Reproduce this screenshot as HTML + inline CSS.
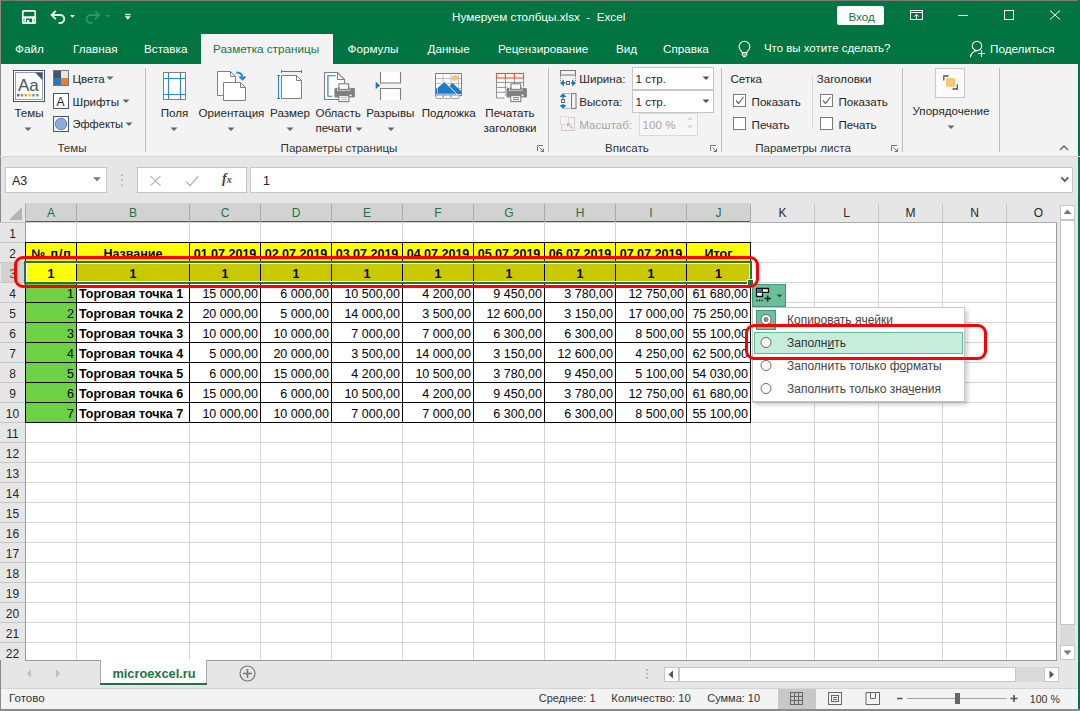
<!DOCTYPE html><html><head><meta charset="utf-8"><style>
html,body{margin:0;padding:0;}
body{width:1080px;height:711px;position:relative;overflow:hidden;background:#f3f3f3;font-family:"Liberation Sans", sans-serif;}
div{position:absolute;box-sizing:border-box;}
.t{white-space:nowrap;line-height:normal;}
svg{position:absolute;overflow:visible;}
</style></head><body>
<div style="left:0px;top:0px;width:1080px;height:64px;background:#007541;"></div>
<div style="left:0px;top:0px;width:1080px;height:1px;background:#7a7a7a;"></div>
<div style="left:0px;top:0px;width:1px;height:711px;background:#8a8a8a;"></div>
<div style="left:1078px;top:0px;width:2px;height:711px;background:#007541;"></div>
<svg style="left:0;top:0" width="140" height="34">
<g fill="none" stroke="#fff" stroke-width="1.7">
<rect x="22.8" y="10.8" width="12.4" height="12.4" rx="1"/>
<path d="M22.8 17.2h12.4"/>
<path d="M25.2 23.2v-5.5h7.8v5.5"/>
</g>
<rect x="27" y="20" width="2.3" height="3.3" fill="#fff"/>
<path d="M55.8 10.8 L51.6 15 L55.8 19.2" fill="none" stroke="#f0f0f0" stroke-width="1.9"/>
<path d="M52 15h8a4 4 0 0 1 0.5 8h-2" fill="none" stroke="#f0f0f0" stroke-width="1.9"/>
<path d="M70 15h5l-2.5 2.8z" fill="#fff"/>
<path d="M95 10.8 L99.2 15 L95 19.2" fill="none" stroke="#1f9a6a" stroke-width="1.9"/>
<path d="M98.8 15h-8a4 4 0 0 0 -0.5 8h2" fill="none" stroke="#1f9a6a" stroke-width="1.9"/>
<path d="M105 15h5l-2.5 2.8z" fill="#1f9a6a"/>
<path d="M125 14.5h5.5" stroke="#fff" stroke-width="1.3"/>
<path d="M124.8 16.3h6l-3 3.5z" fill="#fff"/>
</svg>
<div class="t" style="left:452px;top:10.11px;font-size:11.7px;color:#fff;">Нумеруем столбцы.xlsx&nbsp;&nbsp;-&nbsp;&nbsp;Excel</div>
<div style="left:837px;top:6px;width:47px;height:19px;background:#fff;border-radius:2px;"></div>
<div class="t" style="left:848.5px;top:9.70px;font-size:11.6px;color:#217346;">Вход</div>
<svg style="left:0;top:0" width="1080" height="34">
<g fill="none" stroke="#fff" stroke-width="1">
<rect x="910.5" y="10.5" width="12" height="9"/>
<path d="M910.5 12.5h12"/>
<path d="M916.5 19.5v-5M914.3 16.5l2.2-2.2 2.2 2.2"/>
<path d="M958 15.5h10"/>
<rect x="1004.5" y="10.5" width="9" height="9"/>
<path d="M1050 10.5l10 9M1060 10.5l-10 9"/>
</g></svg>
<div style="left:201px;top:34px;width:132px;height:30px;background:#f3f3f3;"></div>
<div class="t" style="left:15px;top:41.91px;font-size:11.7px;color:#fff;">Файл</div>
<div class="t" style="left:73px;top:41.91px;font-size:11.7px;color:#fff;">Главная</div>
<div class="t" style="left:144px;top:41.91px;font-size:11.7px;color:#fff;">Вставка</div>
<div class="t" style="left:347.5px;top:41.91px;font-size:11.7px;color:#fff;">Формулы</div>
<div class="t" style="left:427.5px;top:41.91px;font-size:11.7px;color:#fff;">Данные</div>
<div class="t" style="left:498px;top:41.91px;font-size:11.7px;color:#fff;">Рецензирование</div>
<div class="t" style="left:616px;top:41.91px;font-size:11.7px;color:#fff;">Вид</div>
<div class="t" style="left:663px;top:41.91px;font-size:11.7px;color:#fff;">Справка</div>
<div class="t" style="left:990px;top:41.91px;font-size:11.7px;color:#fff;">Поделиться</div>
<div class="t" style="left:213px;top:41.91px;font-size:11.7px;color:#217346;">Разметка страницы</div>
<div class="t" style="left:764px;top:42.14px;font-size:11.45px;color:#fff;">Что вы хотите сделать?</div>
<svg style="left:0;top:34" width="1080" height="30">
<g fill="none" stroke="#fff" stroke-width="1.1">
<path d="M742.3 18.5c-1.6-2-3.2-3.5-3.2-5.8a5.4 5.4 0 0 1 10.8 0c0 2.3-1.6 3.8-3.2 5.8z"/>
<rect x="742.3" y="18.8" width="4.4" height="2.2"/>
<path d="M743 22.6h3"/>
<circle cx="977" cy="11.9" r="4.7"/>
<path d="M970.5 23.3c0-3.5 3-6.6 6.5-6.6"/>
<path d="M978 19.5h7M981.5 16v7"/>
</g></svg>
<div style="left:0px;top:156px;width:1080px;height:1px;background:#d5d5d5;"></div>
<div style="left:145px;top:68px;width:1px;height:84px;background:#bdbdbd;"></div>
<div style="left:548px;top:68px;width:1px;height:84px;background:#bdbdbd;"></div>
<div style="left:721px;top:68px;width:1px;height:84px;background:#bdbdbd;"></div>
<div style="left:902px;top:68px;width:1px;height:84px;background:#bdbdbd;"></div>
<div style="left:999px;top:68px;width:1px;height:84px;background:#bdbdbd;"></div>
<div style="left:812px;top:75px;width:1px;height:54px;background:#d9d9d9;"></div>
<div class="t" style="left:-128px;width:400px;text-align:center;top:140.50px;font-size:11.6px;color:#333;">Темы</div>
<div class="t" style="left:139px;width:400px;text-align:center;top:140.50px;font-size:11.6px;color:#333;">Параметры страницы</div>
<div class="t" style="left:427px;width:400px;text-align:center;top:140.50px;font-size:11.6px;color:#333;">Вписать</div>
<div class="t" style="left:603px;width:400px;text-align:center;top:140.50px;font-size:11.6px;color:#333;">Параметры листа</div>
<svg style="left:537px;top:145px" width="8" height="8"><path d="M0.5 6V0.5H6" fill="none" stroke="#777" stroke-width="1"/><path d="M2.5 2.5l4 4M3.5 6.5h3v-3" fill="none" stroke="#777" stroke-width="1"/></svg>
<svg style="left:710px;top:145px" width="8" height="8"><path d="M0.5 6V0.5H6" fill="none" stroke="#777" stroke-width="1"/><path d="M2.5 2.5l4 4M3.5 6.5h3v-3" fill="none" stroke="#777" stroke-width="1"/></svg>
<svg style="left:891px;top:145px" width="8" height="8"><path d="M0.5 6V0.5H6" fill="none" stroke="#777" stroke-width="1"/><path d="M2.5 2.5l4 4M3.5 6.5h3v-3" fill="none" stroke="#777" stroke-width="1"/></svg>
<svg style="left:0;top:60px" width="150" height="100">
<rect x="13.5" y="10.5" width="31" height="31" fill="#fff" stroke="#44546a" stroke-width="1"/>
<rect x="15.5" y="12.5" width="27" height="27" fill="#fff" stroke="#7a8aa0" stroke-width="0.8"/>
<path d="M35 12.5h7.5v7.5z" fill="#44546a"/>
<text x="18" y="30.5" font-family="Liberation Sans" font-size="17" fill="#44546a">Aa</text>
<rect x="17" y="34" width="2.5" height="2.5" fill="#2e75b6"/>
<rect x="20.8" y="34" width="2.5" height="2.5" fill="#ed7d31"/>
<rect x="24.6" y="34" width="2.5" height="2.5" fill="#a5a5a5"/>
<rect x="28.4" y="34" width="2.5" height="2.5" fill="#ffc000"/>
<rect x="32.2" y="34" width="2.5" height="2.5" fill="#5b9bd5"/>
<rect x="36" y="34" width="2.5" height="2.5" fill="#70ad47"/>
<!-- Цвета -->
<rect x="53.5" y="10.5" width="15" height="15" fill="#fff" stroke="#777"/>
<rect x="54" y="11" width="7" height="7" fill="#44546a"/>
<rect x="61" y="11" width="7" height="7" fill="#e7e6e6"/>
<rect x="54" y="18" width="7" height="7" fill="#2e75b6"/>
<rect x="61" y="18" width="7" height="7" fill="#ed7d31"/>
<!-- Шрифты -->
<rect x="53.5" y="33.5" width="15" height="15" fill="#fff" stroke="#44546a"/>
<text x="56.5" y="46" font-family="Liberation Sans" font-size="12" fill="#222">A</text>
<!-- Эффекты -->
<rect x="53.5" y="56.5" width="15" height="15" fill="#fff" stroke="#44546a"/>
<circle cx="61" cy="64" r="5.8" fill="#8eaadb" stroke="#4472c4" stroke-width="0.8"/>
</svg>
<div class="t" style="left:-171px;width:400px;text-align:center;top:106.00px;font-size:11.6px;color:#262626;">Темы</div>
<svg style="left:24px;top:126.5px" width="8" height="5"><path d="M0.5 0.5h7l-3.5 3.5z" fill="#666"/></svg>
<div class="t" style="left:72.5px;top:71.80px;font-size:11.6px;color:#262626;">Цвета</div>
<svg style="left:106px;top:76px" width="8" height="5"><path d="M0.5 0.5h7l-3.5 3.5z" fill="#666"/></svg>
<div class="t" style="left:72.5px;top:94.70px;font-size:11.6px;color:#262626;">Шрифты</div>
<svg style="left:121.5px;top:99px" width="8" height="5"><path d="M0.5 0.5h7l-3.5 3.5z" fill="#666"/></svg>
<div class="t" style="left:72.5px;top:118.45px;font-size:11.1px;color:#262626;">Эффекты</div>
<svg style="left:124.5px;top:122px" width="8" height="5"><path d="M0.5 0.5h7l-3.5 3.5z" fill="#666"/></svg>
<svg style="left:0;top:0" width="560" height="160">
<rect x="163.5" y="72.5" width="22" height="27" fill="#fff" stroke="#808080"/>
<path d="M168.5 73v26M180.5 73v26M164 78.5h21M164 94.5h21" stroke="#2e86cf" stroke-width="1.2"/>
<!-- Ориентация -->
<path d="M217.5 71.5h13l5 5v19h-18z" fill="#fff" stroke="#808080"/>
<path d="M230.5 71.5v5h5" fill="none" stroke="#808080"/>
<path d="M223.5 82.5h17l5 5v13h-22z" fill="#fff" stroke="#808080"/>
<path d="M240.5 82.5v5h5" fill="none" stroke="#808080"/>
<path d="M236.5 72.5c4 0 6 2 6 5.5" fill="none" stroke="#2e86cf" stroke-width="1.8"/>
<path d="M239.5 76.5l3 3 3-3" fill="none" stroke="#2e86cf" stroke-width="1.8"/>
<!-- Размер -->
<path d="M281.5 75.5h15l5 5v18h-20z" fill="#fff" stroke="#808080"/>
<path d="M296.5 75.5v5h5" fill="none" stroke="#808080"/>
<path d="M281.5 71.5h20M281.5 70v3M301.5 70v3" stroke="#2e86cf" stroke-width="1"/>
<path d="M278.5 75.5v23M277 75.5h3M277 98.5h3" stroke="#2e86cf" stroke-width="1"/>
<!-- Область печати -->
<path d="M324.5 72.5h13l7 7v20h-20z" fill="#fff" stroke="#808080" stroke-width="1.1"/>
<path d="M337.5 72.5v7h7" fill="none" stroke="#808080" stroke-width="1.1"/>
<path d="M335.5 75.8h-7.6v20.5h4.5" stroke="#1e7ac6" stroke-width="1.1" fill="none"/>
<g id="prn">
<path d="M334 89.2a1.7 1.7 0 0 1 1.7-1.7h18a1.7 1.7 0 0 1 1.7 1.7v7a1.7 1.7 0 0 1 -1.7 1.7h-18a1.7 1.7 0 0 1 -1.7-1.7z" fill="#808080" stroke="#fff" stroke-width="0.8"/>
<rect x="337.5" y="87" width="12.5" height="3.6" fill="#1e7ac6" stroke="#fff" stroke-width="0.6"/>
<rect x="339" y="83.8" width="9.6" height="5.6" fill="#fff" stroke="#808080" stroke-width="1.1"/>
<rect x="349.6" y="94.6" width="2" height="1.6" fill="#fff"/>
<rect x="338.8" y="95.6" width="10" height="6" fill="#fff" stroke="#808080" stroke-width="1.1"/>
</g>
<path d="M341 97.6h6M341 99.6h6" stroke="#aaa" stroke-width="0.8"/>
<!-- Разрывы -->
<path d="M380.5 72v11h20v-11" fill="#fff" stroke="#808080" stroke-width="1.1"/>
<path d="M380.5 100v-11.5h20v11.5" fill="#fff" stroke="#808080" stroke-width="1.1"/>
<path d="M375.7 81.7l4.5 3.7-4.5 3.7z" fill="#1e7ac6"/>
<!-- Подложка -->
<rect x="435.5" y="73.5" width="26" height="22" fill="#fff" stroke="#808080"/>
<path d="M443 74v21M451 74v21M458.5 74v21M436 78.5h25M436 83.5h25M436 88.5h25" stroke="#b8b8b8" stroke-width="0.9"/>
<path d="M436 95.5v2a1 1 0 0 0 1 1h5a1 1 0 0 0 1-1v-2M443.5 95.5v2a1 1 0 0 0 1 1h5a1 1 0 0 0 1-1v-2M451 95.5v2a1 1 0 0 0 1 1h6a1 1 0 0 0 1-1v-2" fill="#fff" stroke="#9a9a9a" stroke-width="0.9"/>
<circle cx="455" cy="78" r="3" fill="#f4c27a"/>
<path d="M448 87.5l4.5-4.5 8.5 8v3h-7z" fill="#1e7ac6"/>
<path d="M437 94v-6l7.3-6.5 12.5 12.5z" fill="#1e7ac6" stroke="#fff" stroke-width="1"/>
<path d="M436.5 88.5v5.5h20" fill="none" stroke="#1e7ac6" stroke-width="1"/>
<!-- Печатать заголовки -->
<path d="M496.5 73.5h27v24.5h-27z" fill="#fff"/>
<path d="M496.5 78v20h8M505.4 78v18M514.4 78v18M523.5 78v16M497 82.4h26M497 87.4h26M497 92.3h26" fill="none" stroke="#909090" stroke-width="1"/>
<rect x="496.5" y="73.5" width="27" height="4.5" fill="#fff" stroke="#f05a28" stroke-width="1.2"/>
<path d="M505.4 73.5v4.5M514.4 73.5v4.5" stroke="#f05a28" stroke-width="1.2"/>
<g transform="translate(172 0)">
<path d="M334 89.2a1.7 1.7 0 0 1 1.7-1.7h18a1.7 1.7 0 0 1 1.7 1.7v7a1.7 1.7 0 0 1 -1.7 1.7h-18a1.7 1.7 0 0 1 -1.7-1.7z" fill="#808080" stroke="#fff" stroke-width="0.8"/>
<rect x="337.5" y="87" width="12.5" height="3.6" fill="#1e7ac6" stroke="#fff" stroke-width="0.6"/>
<rect x="339" y="83.8" width="9.6" height="5.6" fill="#fff" stroke="#808080" stroke-width="1.1"/>
<rect x="349.6" y="94.6" width="2" height="1.6" fill="#fff"/>
<rect x="338.8" y="95.6" width="10" height="6" fill="#fff" stroke="#808080" stroke-width="1.1"/>
</g>
<path d="M513 97.6h6M513 99.6h6" stroke="#1e7ac6" stroke-width="0.9"/>
</svg>
<div class="t" style="left:-25.5px;width:400px;text-align:center;top:105.50px;font-size:11.6px;color:#262626;">Поля</div>
<svg style="left:170.3px;top:126.5px" width="8" height="5"><path d="M0.5 0.5h7l-3.5 3.5z" fill="#666"/></svg>
<div class="t" style="left:31.5px;width:400px;text-align:center;top:105.50px;font-size:11.6px;color:#262626;">Ориентация</div>
<svg style="left:227px;top:126.5px" width="8" height="5"><path d="M0.5 0.5h7l-3.5 3.5z" fill="#666"/></svg>
<div class="t" style="left:90px;width:400px;text-align:center;top:105.50px;font-size:11.6px;color:#262626;">Размер</div>
<svg style="left:286.4px;top:126.5px" width="8" height="5"><path d="M0.5 0.5h7l-3.5 3.5z" fill="#666"/></svg>
<div class="t" style="left:315.4px;top:105.50px;font-size:11.6px;color:#262626;">Область</div>
<div class="t" style="left:315.4px;top:121.00px;font-size:11.6px;color:#262626;">печати</div>
<svg style="left:354.7px;top:126.5px" width="8" height="5"><path d="M0.5 0.5h7l-3.5 3.5z" fill="#666"/></svg>
<div class="t" style="left:190.3px;width:400px;text-align:center;top:105.50px;font-size:11.6px;color:#262626;">Разрывы</div>
<svg style="left:386.6px;top:126.5px" width="8" height="5"><path d="M0.5 0.5h7l-3.5 3.5z" fill="#666"/></svg>
<div class="t" style="left:248.7px;width:400px;text-align:center;top:105.50px;font-size:11.6px;color:#262626;">Подложка</div>
<div class="t" style="left:310px;width:400px;text-align:center;top:105.50px;font-size:11.6px;color:#262626;">Печатать</div>
<div class="t" style="left:310px;width:400px;text-align:center;top:121.00px;font-size:11.6px;color:#262626;">заголовки</div>
<svg style="left:0;top:0" width="1080" height="160">
<rect x="560.5" y="70.5" width="15" height="4.5" fill="none" stroke="#777"/>
<path d="M560.5 76v6M575.5 76v6" stroke="#777" stroke-dasharray="1 1"/>
<path d="M563 83h2.5M571 83h2.5" stroke="#1e7ac6" stroke-width="1.6"/>
<path d="M560 83l4-3.5v7z M576 83l-4-3.5v7z" fill="#1e7ac6"/>
<rect x="566.5" y="81.5" width="3" height="3" fill="none" stroke="#666" stroke-width="1"/>
<rect x="571.5" y="93.5" width="4.5" height="15" fill="none" stroke="#777"/>
<path d="M564.5 93.5h6M564.5 108.5h6" stroke="#777" stroke-dasharray="1 1"/>
<path d="M563 96v2.5M563 104v2.5" stroke="#1e7ac6" stroke-width="1.6"/>
<path d="M563 93l-3.5 4h7z M563 109l-3.5-4h7z" fill="#1e7ac6"/>
<rect x="561.5" y="99.5" width="3" height="3" fill="none" stroke="#666" stroke-width="1"/>
<rect x="560.5" y="116.5" width="8" height="8" fill="none" stroke="#c8bfbf" stroke-dasharray="1 1"/>
<path d="M569.5 125.5v-5h5v10.5h-13v-5.5h8z" fill="#f7f0f2"/><path d="M561.5 125v5.5h13v-13h-5" fill="none" stroke="#d0c8c8"/>
<path d="M567.5 123.5l5 5M567.5 126.5v-3h3" fill="none" stroke="#c0b8b8" stroke-width="1.1"/>
<!-- combo boxes -->
<rect x="632.5" y="67.5" width="81" height="22" fill="#fff" stroke="#c6c6c6"/>
<rect x="632.5" y="90.5" width="81" height="22" fill="#fff" stroke="#c6c6c6"/>
<path d="M702.5 76.5h7l-3.5 3.5z" fill="#555"/>
<path d="M702.5 99.5h7l-3.5 3.5z" fill="#555"/>
<rect x="639.5" y="113.5" width="58" height="22" fill="#f7f7f7" stroke="#dadada"/>
<path d="M687 120h6l-3-3z M687 125.5h6l-3 3z" fill="#d6d6d6"/>
<!-- checkboxes -->
<rect x="733.5" y="94.5" width="12" height="12" fill="#fff" stroke="#7a7a7a"/>
<rect x="733.5" y="117.5" width="12" height="12" fill="#fff" stroke="#7a7a7a"/>
<rect x="820.5" y="94.5" width="12" height="12" fill="#fff" stroke="#7a7a7a"/>
<rect x="820.5" y="117.5" width="12" height="12" fill="#fff" stroke="#7a7a7a"/>
<path d="M736 100.5l2.5 3 5-6.5" fill="none" stroke="#666" stroke-width="1.2"/>
<path d="M823 100.5l2.5 3 5-6.5" fill="none" stroke="#666" stroke-width="1.2"/>
<!-- arrange -->
<rect x="935.5" y="68.5" width="29" height="29" fill="#fbfbfb" stroke="#c8c8c8" stroke-width="1.1"/>
<path d="M943.8 80.5V76h4.8" fill="none" stroke="#555" stroke-width="1.3"/>
<path d="M952.5 89h4.8v-4.8" fill="none" stroke="#555" stroke-width="1.3"/>
<rect x="946" y="78" width="9.2" height="8.8" fill="#f8c678"/>
<path d="M1060 150l4-4 4 4" fill="none" stroke="#666" stroke-width="1.5"/>
</svg>
<div class="t" style="left:579.3px;top:71.90px;font-size:11.6px;color:#262626;">Ширина:</div>
<div class="t" style="left:579.3px;top:94.70px;font-size:11.6px;color:#262626;">Высота:</div>
<div class="t" style="left:579.3px;top:117.60px;font-size:11.6px;color:#a6a6a6;">Масштаб:</div>
<div class="t" style="left:635.6px;top:72.00px;font-size:11.6px;color:#262626;">1 стр.</div>
<div class="t" style="left:635.6px;top:95.00px;font-size:11.6px;color:#262626;">1 стр.</div>
<div class="t" style="left:642.6px;top:118.00px;font-size:11.6px;color:#a6a6a6;">100 %</div>
<div class="t" style="left:730.5px;top:71.90px;font-size:11.6px;color:#262626;">Сетка</div>
<div class="t" style="left:751.6px;top:94.70px;font-size:11.6px;color:#262626;">Показать</div>
<div class="t" style="left:751.6px;top:117.60px;font-size:11.6px;color:#262626;">Печать</div>
<div class="t" style="left:816.7px;top:71.90px;font-size:11.6px;color:#262626;">Заголовки</div>
<div class="t" style="left:838.5px;top:94.70px;font-size:11.6px;color:#262626;">Показать</div>
<div class="t" style="left:838.5px;top:117.60px;font-size:11.6px;color:#262626;">Печать</div>
<div class="t" style="left:751px;width:400px;text-align:center;top:103.90px;font-size:11.6px;color:#262626;">Упорядочение</div>
<svg style="left:947.2px;top:124.5px" width="8" height="5"><path d="M0.5 0.5h7l-3.5 3.5z" fill="#666"/></svg>
<div style="left:1px;top:157px;width:1077px;height:531px;background:#e6e6e6;"></div>
<div style="left:5px;top:167px;width:102px;height:26px;background:#fff;border:1px solid #c6c6c6;"></div>
<div class="t" style="left:12px;top:173.59px;font-size:12.5px;color:#222;">A3</div>
<svg style="left:92.5px;top:177px" width="9" height="6"><path d="M0.2 0.3h7.6l-3.8 4z" fill="#777"/></svg>
<div style="left:137px;top:167px;width:110px;height:26px;background:#fff;border:1px solid #c6c6c6;"></div>
<svg style="left:0;top:155px" width="300" height="45">
<path d="M122 19.5v1.5M122 24.5v1.5M122 29.5v1.5" stroke="#9a9a9a" stroke-width="1.3"/>
<path d="M150.5 21l10 9.5M160.5 21l-10 9.5" stroke="#bdbdbd" stroke-width="1.4"/>
<path d="M186 26.5l4 4 8.5-9.5" fill="none" stroke="#bdbdbd" stroke-width="1.6"/>
</svg>
<div class="t" style="left:222px;top:171px;font-family:'Liberation Serif',serif;font-style:italic;font-weight:bold;font-size:14px;color:#444;">f<span style="font-size:10px">x</span></div>
<div style="left:250px;top:167px;width:823px;height:26px;background:#fff;border:1px solid #c6c6c6;"></div>
<div class="t" style="left:263px;top:173.59px;font-size:12.5px;color:#222;">1</div>
<svg style="left:1060px;top:176px" width="10" height="8"><path d="M1.3 1.3l3.5 3.7 3.5-3.7" fill="none" stroke="#555" stroke-width="1.8"/></svg>
<div style="left:25px;top:203px;width:725px;height:19px;background:#d2d2d2;"></div>
<div style="left:25px;top:221px;width:726px;height:2px;background:#217346;"></div>
<div style="left:0px;top:222px;width:25px;height:438px;background:#e6e6e6;"></div>
<div style="left:1px;top:262px;width:24px;height:20px;background:#d2d2d2;"></div>
<svg style="left:0;top:203px" width="25" height="19"><path d="M22 4v13h-13z" fill="#b4b4b4"/></svg>
<div style="left:26px;top:223px;width:1030px;height:437px;background:#fff;"></div>
<div style="left:25px;top:223px;width:1px;height:437px;background:#d4d4d4;"></div>
<div style="left:76px;top:223px;width:1px;height:437px;background:#d4d4d4;"></div>
<div style="left:189px;top:223px;width:1px;height:437px;background:#d4d4d4;"></div>
<div style="left:260px;top:223px;width:1px;height:437px;background:#d4d4d4;"></div>
<div style="left:331px;top:223px;width:1px;height:437px;background:#d4d4d4;"></div>
<div style="left:402px;top:223px;width:1px;height:437px;background:#d4d4d4;"></div>
<div style="left:473px;top:223px;width:1px;height:437px;background:#d4d4d4;"></div>
<div style="left:544px;top:223px;width:1px;height:437px;background:#d4d4d4;"></div>
<div style="left:615px;top:223px;width:1px;height:437px;background:#d4d4d4;"></div>
<div style="left:686px;top:223px;width:1px;height:437px;background:#d4d4d4;"></div>
<div style="left:750px;top:223px;width:1px;height:437px;background:#d4d4d4;"></div>
<div style="left:814px;top:223px;width:1px;height:437px;background:#d4d4d4;"></div>
<div style="left:878px;top:223px;width:1px;height:437px;background:#d4d4d4;"></div>
<div style="left:942px;top:223px;width:1px;height:437px;background:#d4d4d4;"></div>
<div style="left:1006px;top:223px;width:1px;height:437px;background:#d4d4d4;"></div>
<div style="left:1056px;top:223px;width:1px;height:437px;background:#d4d4d4;"></div>
<div style="left:76px;top:204px;width:1px;height:18px;background:#ababab;"></div>
<div style="left:189px;top:204px;width:1px;height:18px;background:#ababab;"></div>
<div style="left:260px;top:204px;width:1px;height:18px;background:#ababab;"></div>
<div style="left:331px;top:204px;width:1px;height:18px;background:#ababab;"></div>
<div style="left:402px;top:204px;width:1px;height:18px;background:#ababab;"></div>
<div style="left:473px;top:204px;width:1px;height:18px;background:#ababab;"></div>
<div style="left:544px;top:204px;width:1px;height:18px;background:#ababab;"></div>
<div style="left:615px;top:204px;width:1px;height:18px;background:#ababab;"></div>
<div style="left:686px;top:204px;width:1px;height:18px;background:#ababab;"></div>
<div style="left:750px;top:204px;width:1px;height:18px;background:#ababab;"></div>
<div style="left:814px;top:204px;width:1px;height:18px;background:#c6c6c6;"></div>
<div style="left:878px;top:204px;width:1px;height:18px;background:#c6c6c6;"></div>
<div style="left:942px;top:204px;width:1px;height:18px;background:#c6c6c6;"></div>
<div style="left:1006px;top:204px;width:1px;height:18px;background:#c6c6c6;"></div>
<div style="left:25px;top:203px;width:1px;height:19px;background:#ababab;"></div>
<div style="left:26px;top:222px;width:1030px;height:1px;background:#d4d4d4;"></div>
<div style="left:0px;top:222px;width:25px;height:1px;background:#c6c6c6;"></div>
<div style="left:26px;top:242px;width:1030px;height:1px;background:#d4d4d4;"></div>
<div style="left:0px;top:242px;width:25px;height:1px;background:#c6c6c6;"></div>
<div style="left:26px;top:262px;width:1030px;height:1px;background:#d4d4d4;"></div>
<div style="left:0px;top:262px;width:25px;height:1px;background:#c6c6c6;"></div>
<div style="left:26px;top:282px;width:1030px;height:1px;background:#d4d4d4;"></div>
<div style="left:0px;top:282px;width:25px;height:1px;background:#c6c6c6;"></div>
<div style="left:26px;top:302px;width:1030px;height:1px;background:#d4d4d4;"></div>
<div style="left:0px;top:302px;width:25px;height:1px;background:#c6c6c6;"></div>
<div style="left:26px;top:322px;width:1030px;height:1px;background:#d4d4d4;"></div>
<div style="left:0px;top:322px;width:25px;height:1px;background:#c6c6c6;"></div>
<div style="left:26px;top:342px;width:1030px;height:1px;background:#d4d4d4;"></div>
<div style="left:0px;top:342px;width:25px;height:1px;background:#c6c6c6;"></div>
<div style="left:26px;top:362px;width:1030px;height:1px;background:#d4d4d4;"></div>
<div style="left:0px;top:362px;width:25px;height:1px;background:#c6c6c6;"></div>
<div style="left:26px;top:382px;width:1030px;height:1px;background:#d4d4d4;"></div>
<div style="left:0px;top:382px;width:25px;height:1px;background:#c6c6c6;"></div>
<div style="left:26px;top:402px;width:1030px;height:1px;background:#d4d4d4;"></div>
<div style="left:0px;top:402px;width:25px;height:1px;background:#c6c6c6;"></div>
<div style="left:26px;top:422px;width:1030px;height:1px;background:#d4d4d4;"></div>
<div style="left:0px;top:422px;width:25px;height:1px;background:#c6c6c6;"></div>
<div style="left:26px;top:442px;width:1030px;height:1px;background:#d4d4d4;"></div>
<div style="left:0px;top:442px;width:25px;height:1px;background:#c6c6c6;"></div>
<div style="left:26px;top:462px;width:1030px;height:1px;background:#d4d4d4;"></div>
<div style="left:0px;top:462px;width:25px;height:1px;background:#c6c6c6;"></div>
<div style="left:26px;top:482px;width:1030px;height:1px;background:#d4d4d4;"></div>
<div style="left:0px;top:482px;width:25px;height:1px;background:#c6c6c6;"></div>
<div style="left:26px;top:502px;width:1030px;height:1px;background:#d4d4d4;"></div>
<div style="left:0px;top:502px;width:25px;height:1px;background:#c6c6c6;"></div>
<div style="left:26px;top:522px;width:1030px;height:1px;background:#d4d4d4;"></div>
<div style="left:0px;top:522px;width:25px;height:1px;background:#c6c6c6;"></div>
<div style="left:26px;top:542px;width:1030px;height:1px;background:#d4d4d4;"></div>
<div style="left:0px;top:542px;width:25px;height:1px;background:#c6c6c6;"></div>
<div style="left:26px;top:562px;width:1030px;height:1px;background:#d4d4d4;"></div>
<div style="left:0px;top:562px;width:25px;height:1px;background:#c6c6c6;"></div>
<div style="left:26px;top:582px;width:1030px;height:1px;background:#d4d4d4;"></div>
<div style="left:0px;top:582px;width:25px;height:1px;background:#c6c6c6;"></div>
<div style="left:26px;top:602px;width:1030px;height:1px;background:#d4d4d4;"></div>
<div style="left:0px;top:602px;width:25px;height:1px;background:#c6c6c6;"></div>
<div style="left:26px;top:622px;width:1030px;height:1px;background:#d4d4d4;"></div>
<div style="left:0px;top:622px;width:25px;height:1px;background:#c6c6c6;"></div>
<div style="left:26px;top:642px;width:1030px;height:1px;background:#d4d4d4;"></div>
<div style="left:0px;top:642px;width:25px;height:1px;background:#c6c6c6;"></div>
<div style="left:25px;top:222px;width:1px;height:438px;background:#9b9b9b;"></div>
<div style="left:1056px;top:222px;width:1px;height:438px;background:#9b9b9b;"></div>
<div style="left:25px;top:660px;width:1032px;height:1px;background:#9b9b9b;"></div>
<div style="left:751px;top:222px;width:306px;height:1px;background:#ababab;"></div>
<div class="t" style="left:-149.0px;width:400px;text-align:center;top:205.64px;font-size:12px;color:#217346;">A</div>
<div class="t" style="left:-67.0px;width:400px;text-align:center;top:205.64px;font-size:12px;color:#217346;">B</div>
<div class="t" style="left:25.0px;width:400px;text-align:center;top:205.64px;font-size:12px;color:#217346;">C</div>
<div class="t" style="left:96.0px;width:400px;text-align:center;top:205.64px;font-size:12px;color:#217346;">D</div>
<div class="t" style="left:167.0px;width:400px;text-align:center;top:205.64px;font-size:12px;color:#217346;">E</div>
<div class="t" style="left:238.0px;width:400px;text-align:center;top:205.64px;font-size:12px;color:#217346;">F</div>
<div class="t" style="left:309.0px;width:400px;text-align:center;top:205.64px;font-size:12px;color:#217346;">G</div>
<div class="t" style="left:380.0px;width:400px;text-align:center;top:205.64px;font-size:12px;color:#217346;">H</div>
<div class="t" style="left:451.0px;width:400px;text-align:center;top:205.64px;font-size:12px;color:#217346;">I</div>
<div class="t" style="left:518.5px;width:400px;text-align:center;top:205.64px;font-size:12px;color:#217346;">J</div>
<div class="t" style="left:582.5px;width:400px;text-align:center;top:205.64px;font-size:12px;color:#262626;">K</div>
<div class="t" style="left:646.5px;width:400px;text-align:center;top:205.64px;font-size:12px;color:#262626;">L</div>
<div class="t" style="left:710.5px;width:400px;text-align:center;top:205.64px;font-size:12px;color:#262626;">M</div>
<div class="t" style="left:774.5px;width:400px;text-align:center;top:205.64px;font-size:12px;color:#262626;">N</div>
<div class="t" style="left:838.5px;width:400px;text-align:center;top:205.64px;font-size:12px;color:#262626;">O</div>
<div class="t" style="left:-187.5px;width:400px;text-align:center;top:227.14px;font-size:12px;color:#262626;">1</div>
<div class="t" style="left:-187.5px;width:400px;text-align:center;top:247.14px;font-size:12px;color:#262626;">2</div>
<div class="t" style="left:-187.5px;width:400px;text-align:center;top:267.14px;font-size:12px;color:#217346;">3</div>
<div class="t" style="left:-187.5px;width:400px;text-align:center;top:287.14px;font-size:12px;color:#262626;">4</div>
<div class="t" style="left:-187.5px;width:400px;text-align:center;top:307.14px;font-size:12px;color:#262626;">5</div>
<div class="t" style="left:-187.5px;width:400px;text-align:center;top:327.14px;font-size:12px;color:#262626;">6</div>
<div class="t" style="left:-187.5px;width:400px;text-align:center;top:347.14px;font-size:12px;color:#262626;">7</div>
<div class="t" style="left:-187.5px;width:400px;text-align:center;top:367.14px;font-size:12px;color:#262626;">8</div>
<div class="t" style="left:-187.5px;width:400px;text-align:center;top:387.14px;font-size:12px;color:#262626;">9</div>
<div class="t" style="left:-187.5px;width:400px;text-align:center;top:407.14px;font-size:12px;color:#262626;">10</div>
<div class="t" style="left:-187.5px;width:400px;text-align:center;top:427.14px;font-size:12px;color:#262626;">11</div>
<div class="t" style="left:-187.5px;width:400px;text-align:center;top:447.14px;font-size:12px;color:#262626;">12</div>
<div class="t" style="left:-187.5px;width:400px;text-align:center;top:467.14px;font-size:12px;color:#262626;">13</div>
<div class="t" style="left:-187.5px;width:400px;text-align:center;top:487.14px;font-size:12px;color:#262626;">14</div>
<div class="t" style="left:-187.5px;width:400px;text-align:center;top:507.14px;font-size:12px;color:#262626;">15</div>
<div class="t" style="left:-187.5px;width:400px;text-align:center;top:527.14px;font-size:12px;color:#262626;">16</div>
<div class="t" style="left:-187.5px;width:400px;text-align:center;top:547.14px;font-size:12px;color:#262626;">17</div>
<div class="t" style="left:-187.5px;width:400px;text-align:center;top:567.14px;font-size:12px;color:#262626;">18</div>
<div class="t" style="left:-187.5px;width:400px;text-align:center;top:587.14px;font-size:12px;color:#262626;">19</div>
<div class="t" style="left:-187.5px;width:400px;text-align:center;top:607.14px;font-size:12px;color:#262626;">20</div>
<div class="t" style="left:-187.5px;width:400px;text-align:center;top:627.14px;font-size:12px;color:#262626;">21</div>
<div class="t" style="left:-187.5px;width:400px;text-align:center;top:647.14px;font-size:12px;color:#262626;">22</div>
<div style="left:25px;top:242px;width:725px;height:20px;background:#ffff00;"></div>
<div style="left:25px;top:262px;width:51px;height:20px;background:#ffff00;"></div>
<div style="left:76px;top:262px;width:674px;height:20px;background:#c9c900;"></div>
<div style="left:25px;top:282px;width:51px;height:140px;background:#6ed045;"></div>
<div style="left:25px;top:242px;width:726px;height:1px;background:#000;"></div>
<div style="left:25px;top:262px;width:726px;height:1px;background:#000;"></div>
<div style="left:25px;top:282px;width:726px;height:1px;background:#000;"></div>
<div style="left:25px;top:302px;width:726px;height:1px;background:#000;"></div>
<div style="left:25px;top:322px;width:726px;height:1px;background:#000;"></div>
<div style="left:25px;top:342px;width:726px;height:1px;background:#000;"></div>
<div style="left:25px;top:362px;width:726px;height:1px;background:#000;"></div>
<div style="left:25px;top:382px;width:726px;height:1px;background:#000;"></div>
<div style="left:25px;top:402px;width:726px;height:1px;background:#000;"></div>
<div style="left:25px;top:422px;width:726px;height:1px;background:#000;"></div>
<div style="left:25px;top:242px;width:1px;height:181px;background:#000;"></div>
<div style="left:76px;top:242px;width:1px;height:181px;background:#000;"></div>
<div style="left:189px;top:242px;width:1px;height:181px;background:#000;"></div>
<div style="left:260px;top:242px;width:1px;height:181px;background:#000;"></div>
<div style="left:331px;top:242px;width:1px;height:181px;background:#000;"></div>
<div style="left:402px;top:242px;width:1px;height:181px;background:#000;"></div>
<div style="left:473px;top:242px;width:1px;height:181px;background:#000;"></div>
<div style="left:544px;top:242px;width:1px;height:181px;background:#000;"></div>
<div style="left:615px;top:242px;width:1px;height:181px;background:#000;"></div>
<div style="left:686px;top:242px;width:1px;height:181px;background:#000;"></div>
<div style="left:750px;top:242px;width:1px;height:181px;background:#000;"></div>
<div class="t" style="left:-148.5px;width:400px;text-align:center;top:246.99px;font-size:12.5px;color:#000;font-weight:bold;letter-spacing:0.9px;">№ п/п</div>
<div class="t" style="left:-67.0px;width:400px;text-align:center;top:246.99px;font-size:12.5px;color:#000;font-weight:bold;">Название</div>
<div class="t" style="left:25.0px;width:400px;text-align:center;top:246.99px;font-size:12.5px;color:#000;font-weight:bold;">01.07.2019</div>
<div class="t" style="left:96.0px;width:400px;text-align:center;top:246.99px;font-size:12.5px;color:#000;font-weight:bold;">02.07.2019</div>
<div class="t" style="left:167.0px;width:400px;text-align:center;top:246.99px;font-size:12.5px;color:#000;font-weight:bold;">03.07.2019</div>
<div class="t" style="left:238.0px;width:400px;text-align:center;top:246.99px;font-size:12.5px;color:#000;font-weight:bold;">04.07.2019</div>
<div class="t" style="left:309.0px;width:400px;text-align:center;top:246.99px;font-size:12.5px;color:#000;font-weight:bold;">05.07.2019</div>
<div class="t" style="left:380.0px;width:400px;text-align:center;top:246.99px;font-size:12.5px;color:#000;font-weight:bold;">06.07.2019</div>
<div class="t" style="left:451.0px;width:400px;text-align:center;top:246.99px;font-size:12.5px;color:#000;font-weight:bold;">07.07.2019</div>
<div class="t" style="left:518.5px;width:400px;text-align:center;top:246.99px;font-size:12.5px;color:#000;font-weight:bold;">Итог</div>
<div class="t" style="left:-149.0px;width:400px;text-align:center;top:266.99px;font-size:12.5px;color:#000;font-weight:bold;">1</div>
<div class="t" style="left:-67.0px;width:400px;text-align:center;top:266.99px;font-size:12.5px;color:#000;font-weight:bold;">1</div>
<div class="t" style="left:25.0px;width:400px;text-align:center;top:266.99px;font-size:12.5px;color:#000;font-weight:bold;">1</div>
<div class="t" style="left:96.0px;width:400px;text-align:center;top:266.99px;font-size:12.5px;color:#000;font-weight:bold;">1</div>
<div class="t" style="left:167.0px;width:400px;text-align:center;top:266.99px;font-size:12.5px;color:#000;font-weight:bold;">1</div>
<div class="t" style="left:238.0px;width:400px;text-align:center;top:266.99px;font-size:12.5px;color:#000;font-weight:bold;">1</div>
<div class="t" style="left:309.0px;width:400px;text-align:center;top:266.99px;font-size:12.5px;color:#000;font-weight:bold;">1</div>
<div class="t" style="left:380.0px;width:400px;text-align:center;top:266.99px;font-size:12.5px;color:#000;font-weight:bold;">1</div>
<div class="t" style="left:451.0px;width:400px;text-align:center;top:266.99px;font-size:12.5px;color:#000;font-weight:bold;">1</div>
<div class="t" style="left:518.5px;width:400px;text-align:center;top:266.99px;font-size:12.5px;color:#000;font-weight:bold;">1</div>
<div class="t" style="left:-326px;width:400px;text-align:right;top:286.99px;font-size:12.5px;color:#000;">1</div>
<div class="t" style="left:79px;top:286.99px;font-size:12.5px;color:#000;font-weight:bold;">Торговая точка 1</div>
<div class="t" style="left:-142px;width:400px;text-align:right;top:286.99px;font-size:12.5px;color:#000;">15 000,00</div>
<div class="t" style="left:-71px;width:400px;text-align:right;top:286.99px;font-size:12.5px;color:#000;">6 000,00</div>
<div class="t" style="left:0px;width:400px;text-align:right;top:286.99px;font-size:12.5px;color:#000;">10 500,00</div>
<div class="t" style="left:71px;width:400px;text-align:right;top:286.99px;font-size:12.5px;color:#000;">4 200,00</div>
<div class="t" style="left:142px;width:400px;text-align:right;top:286.99px;font-size:12.5px;color:#000;">9 450,00</div>
<div class="t" style="left:213px;width:400px;text-align:right;top:286.99px;font-size:12.5px;color:#000;">3 780,00</div>
<div class="t" style="left:284px;width:400px;text-align:right;top:286.99px;font-size:12.5px;color:#000;">12 750,00</div>
<div class="t" style="left:348px;width:400px;text-align:right;top:286.99px;font-size:12.5px;color:#000;">61 680,00</div>
<div class="t" style="left:-326px;width:400px;text-align:right;top:306.99px;font-size:12.5px;color:#000;">2</div>
<div class="t" style="left:79px;top:306.99px;font-size:12.5px;color:#000;font-weight:bold;">Торговая точка 2</div>
<div class="t" style="left:-142px;width:400px;text-align:right;top:306.99px;font-size:12.5px;color:#000;">20 000,00</div>
<div class="t" style="left:-71px;width:400px;text-align:right;top:306.99px;font-size:12.5px;color:#000;">5 000,00</div>
<div class="t" style="left:0px;width:400px;text-align:right;top:306.99px;font-size:12.5px;color:#000;">14 000,00</div>
<div class="t" style="left:71px;width:400px;text-align:right;top:306.99px;font-size:12.5px;color:#000;">3 500,00</div>
<div class="t" style="left:142px;width:400px;text-align:right;top:306.99px;font-size:12.5px;color:#000;">12 600,00</div>
<div class="t" style="left:213px;width:400px;text-align:right;top:306.99px;font-size:12.5px;color:#000;">3 150,00</div>
<div class="t" style="left:284px;width:400px;text-align:right;top:306.99px;font-size:12.5px;color:#000;">17 000,00</div>
<div class="t" style="left:348px;width:400px;text-align:right;top:306.99px;font-size:12.5px;color:#000;">75 250,00</div>
<div class="t" style="left:-326px;width:400px;text-align:right;top:326.99px;font-size:12.5px;color:#000;">3</div>
<div class="t" style="left:79px;top:326.99px;font-size:12.5px;color:#000;font-weight:bold;">Торговая точка 3</div>
<div class="t" style="left:-142px;width:400px;text-align:right;top:326.99px;font-size:12.5px;color:#000;">10 000,00</div>
<div class="t" style="left:-71px;width:400px;text-align:right;top:326.99px;font-size:12.5px;color:#000;">10 000,00</div>
<div class="t" style="left:0px;width:400px;text-align:right;top:326.99px;font-size:12.5px;color:#000;">7 000,00</div>
<div class="t" style="left:71px;width:400px;text-align:right;top:326.99px;font-size:12.5px;color:#000;">7 000,00</div>
<div class="t" style="left:142px;width:400px;text-align:right;top:326.99px;font-size:12.5px;color:#000;">6 300,00</div>
<div class="t" style="left:213px;width:400px;text-align:right;top:326.99px;font-size:12.5px;color:#000;">6 300,00</div>
<div class="t" style="left:284px;width:400px;text-align:right;top:326.99px;font-size:12.5px;color:#000;">8 500,00</div>
<div class="t" style="left:348px;width:400px;text-align:right;top:326.99px;font-size:12.5px;color:#000;">55 100,00</div>
<div class="t" style="left:-326px;width:400px;text-align:right;top:346.99px;font-size:12.5px;color:#000;">4</div>
<div class="t" style="left:79px;top:346.99px;font-size:12.5px;color:#000;font-weight:bold;">Торговая точка 4</div>
<div class="t" style="left:-142px;width:400px;text-align:right;top:346.99px;font-size:12.5px;color:#000;">5 000,00</div>
<div class="t" style="left:-71px;width:400px;text-align:right;top:346.99px;font-size:12.5px;color:#000;">20 000,00</div>
<div class="t" style="left:0px;width:400px;text-align:right;top:346.99px;font-size:12.5px;color:#000;">3 500,00</div>
<div class="t" style="left:71px;width:400px;text-align:right;top:346.99px;font-size:12.5px;color:#000;">14 000,00</div>
<div class="t" style="left:142px;width:400px;text-align:right;top:346.99px;font-size:12.5px;color:#000;">3 150,00</div>
<div class="t" style="left:213px;width:400px;text-align:right;top:346.99px;font-size:12.5px;color:#000;">12 600,00</div>
<div class="t" style="left:284px;width:400px;text-align:right;top:346.99px;font-size:12.5px;color:#000;">4 250,00</div>
<div class="t" style="left:348px;width:400px;text-align:right;top:346.99px;font-size:12.5px;color:#000;">62 500,00</div>
<div class="t" style="left:-326px;width:400px;text-align:right;top:366.99px;font-size:12.5px;color:#000;">5</div>
<div class="t" style="left:79px;top:366.99px;font-size:12.5px;color:#000;font-weight:bold;">Торговая точка 5</div>
<div class="t" style="left:-142px;width:400px;text-align:right;top:366.99px;font-size:12.5px;color:#000;">6 000,00</div>
<div class="t" style="left:-71px;width:400px;text-align:right;top:366.99px;font-size:12.5px;color:#000;">15 000,00</div>
<div class="t" style="left:0px;width:400px;text-align:right;top:366.99px;font-size:12.5px;color:#000;">4 200,00</div>
<div class="t" style="left:71px;width:400px;text-align:right;top:366.99px;font-size:12.5px;color:#000;">10 500,00</div>
<div class="t" style="left:142px;width:400px;text-align:right;top:366.99px;font-size:12.5px;color:#000;">3 780,00</div>
<div class="t" style="left:213px;width:400px;text-align:right;top:366.99px;font-size:12.5px;color:#000;">9 450,00</div>
<div class="t" style="left:284px;width:400px;text-align:right;top:366.99px;font-size:12.5px;color:#000;">5 100,00</div>
<div class="t" style="left:348px;width:400px;text-align:right;top:366.99px;font-size:12.5px;color:#000;">54 030,00</div>
<div class="t" style="left:-326px;width:400px;text-align:right;top:386.99px;font-size:12.5px;color:#000;">6</div>
<div class="t" style="left:79px;top:386.99px;font-size:12.5px;color:#000;font-weight:bold;">Торговая точка 6</div>
<div class="t" style="left:-142px;width:400px;text-align:right;top:386.99px;font-size:12.5px;color:#000;">15 000,00</div>
<div class="t" style="left:-71px;width:400px;text-align:right;top:386.99px;font-size:12.5px;color:#000;">6 000,00</div>
<div class="t" style="left:0px;width:400px;text-align:right;top:386.99px;font-size:12.5px;color:#000;">10 500,00</div>
<div class="t" style="left:71px;width:400px;text-align:right;top:386.99px;font-size:12.5px;color:#000;">4 200,00</div>
<div class="t" style="left:142px;width:400px;text-align:right;top:386.99px;font-size:12.5px;color:#000;">9 450,00</div>
<div class="t" style="left:213px;width:400px;text-align:right;top:386.99px;font-size:12.5px;color:#000;">3 780,00</div>
<div class="t" style="left:284px;width:400px;text-align:right;top:386.99px;font-size:12.5px;color:#000;">12 750,00</div>
<div class="t" style="left:348px;width:400px;text-align:right;top:386.99px;font-size:12.5px;color:#000;">61 680,00</div>
<div class="t" style="left:-326px;width:400px;text-align:right;top:406.99px;font-size:12.5px;color:#000;">7</div>
<div class="t" style="left:79px;top:406.99px;font-size:12.5px;color:#000;font-weight:bold;">Торговая точка 7</div>
<div class="t" style="left:-142px;width:400px;text-align:right;top:406.99px;font-size:12.5px;color:#000;">10 000,00</div>
<div class="t" style="left:-71px;width:400px;text-align:right;top:406.99px;font-size:12.5px;color:#000;">10 000,00</div>
<div class="t" style="left:0px;width:400px;text-align:right;top:406.99px;font-size:12.5px;color:#000;">7 000,00</div>
<div class="t" style="left:71px;width:400px;text-align:right;top:406.99px;font-size:12.5px;color:#000;">7 000,00</div>
<div class="t" style="left:142px;width:400px;text-align:right;top:406.99px;font-size:12.5px;color:#000;">6 300,00</div>
<div class="t" style="left:213px;width:400px;text-align:right;top:406.99px;font-size:12.5px;color:#000;">6 300,00</div>
<div class="t" style="left:284px;width:400px;text-align:right;top:406.99px;font-size:12.5px;color:#000;">8 500,00</div>
<div class="t" style="left:348px;width:400px;text-align:right;top:406.99px;font-size:12.5px;color:#000;">55 100,00</div>
<div style="left:26px;top:263px;width:724px;height:19px;border:1px solid #fff;"></div>
<div style="left:24px;top:261px;width:728px;height:23px;border:2px solid #217346;"></div>
<div style="left:747px;top:279px;width:7px;height:7px;background:#217346;border:1px solid #fff;"></div>
<div style="left:1060px;top:205px;width:15px;height:455px;background:#dadada;"></div>
<div style="left:1060px;top:205px;width:15px;height:15px;background:#fff;border:1px solid #c6c6c6;"></div>
<svg style="left:1063px;top:209px" width="9" height="6"><path d="M0.5 5h8l-4-4.5z" fill="#777"/></svg>
<div style="left:1060px;top:220px;width:15px;height:405px;background:#fff;border:1px solid #c6c6c6;"></div>
<div style="left:1060px;top:645px;width:15px;height:15px;background:#fff;border:1px solid #c6c6c6;"></div>
<svg style="left:1063px;top:650px" width="9" height="6"><path d="M0.5 0.5h8l-4 4.5z" fill="#777"/></svg>
<div style="left:1px;top:661px;width:1077px;height:27px;background:#e6e6e6;"></div>
<svg style="left:0;top:660px" width="280" height="28">
<path d="M31 9v9l-4-4.5z" fill="#c0c0c0"/>
<path d="M56 9v9l4-4.5z" fill="#c0c0c0"/>
<circle cx="247.5" cy="13.5" r="7.5" fill="none" stroke="#777" stroke-width="1.2"/>
<path d="M243 13.5h9M247.5 9v9" stroke="#777" stroke-width="1.6"/>
</svg>
<div style="left:100px;top:660px;width:107px;height:25px;background:#fff;border-left:1px solid #ababab;border-right:1px solid #ababab;"></div>
<div style="left:100px;top:683px;width:107px;height:2px;background:#217346;"></div>
<div class="t" style="left:-46px;width:400px;text-align:center;top:666.22px;font-size:12.8px;color:#217346;font-weight:bold;">microexcel.ru</div>
<svg style="left:644px;top:668px" width="6" height="12"><path d="M3 1v1.5M3 5v1.5M3 9v1.5" stroke="#999" stroke-width="1.5"/></svg>
<div style="left:664px;top:667px;width:395px;height:15px;background:#dadada;"></div>
<div style="left:664px;top:667px;width:15px;height:15px;background:#fff;border:1px solid #c6c6c6;"></div>
<svg style="left:668px;top:670px" width="6" height="9"><path d="M5 0.5v8l-4.5-4z" fill="#555"/></svg>
<div style="left:679px;top:667px;width:337px;height:15px;background:#fff;border:1px solid #c6c6c6;"></div>
<div style="left:1044px;top:667px;width:15px;height:15px;background:#fff;border:1px solid #c6c6c6;"></div>
<svg style="left:1049px;top:670px" width="6" height="9"><path d="M0.5 0.5v8l4.5-4z" fill="#555"/></svg>
<div style="left:1px;top:688px;width:1077px;height:22px;background:#f3f3f3;border-top:1px solid #d5d5d5;"></div>
<div style="left:0px;top:709px;width:1080px;height:2px;background:#8a8a8a;"></div>
<div class="t" style="left:9px;top:691.20px;font-size:11.6px;color:#333;">Готово</div>
<div class="t" style="left:538.7px;top:692.14px;font-size:11.0px;color:#333;">Среднее: 1</div>
<div class="t" style="left:611.3px;top:691.87px;font-size:11.3px;color:#333;">Количество: 10</div>
<div class="t" style="left:707.2px;top:692.14px;font-size:11.0px;color:#333;">Сумма: 10</div>
<div style="left:778px;top:689px;width:38px;height:20px;background:#c8c8c8;"></div>
<svg style="left:0;top:680px" width="1080" height="31">
<g fill="none" stroke="#666" stroke-width="1">
<rect x="790.5" y="12.5" width="12" height="12"/>
<path d="M794.5 12.5v12M798.5 12.5v12M790.5 16.5h12M790.5 20.5h12"/>
<rect x="828.5" y="12.5" width="13" height="12"/>
<rect x="831.5" y="15.5" width="7" height="6"/>
<path d="M833 17.5h4M833 19.5h4"/>
<path d="M866 12.5h13.5v12h-13.5z"/>
<path d="M870.5 12.5v6h5v-6"/>
</g>
<path d="M897 18.5h5.5" stroke="#555" stroke-width="1.6"/>
<path d="M907 18.5h99.5" stroke="#a0a0a0" stroke-width="1"/>
<rect x="955" y="13" width="5" height="11" fill="#666"/>
<path d="M1010.5 18.5h7M1014 15v7" stroke="#555" stroke-width="1.6"/>
</svg>
<div class="t" style="left:1029.8px;top:692.51px;font-size:10.6px;color:#333;">100 %</div>
<div style="left:752px;top:284px;width:34px;height:23px;background:#6cbf9c;border:1px solid #3f9a70;"></div>
<svg style="left:752px;top:284px" width="34" height="23">
<path d="M4.5 4.5h12v3.8h-6v4.2h-6z" fill="#fff" stroke="#111" stroke-width="1.3"/>
<rect x="5.2" y="5.2" width="4.8" height="2.6" fill="#1e6fd9"/>
<path d="M10.3 4.5v4M4.5 8.3h6" stroke="#111" stroke-width="1.1"/>
<path d="M4.3 16.5h1.3M6.9 16.5h1.3M9.5 16.5h1.3" stroke="#111" stroke-width="1.3"/>
<path d="M12.6 14.5h6.2M15.7 11.4v6.2" stroke="#111" stroke-width="1.4"/>
<path d="M24.5 10.5h6l-3 3z" fill="#444"/>
</svg>
<div style="left:752px;top:307px;width:213px;height:95px;background:#fff;border:1px solid #c6c6c6;box-shadow:3px 3px 4px rgba(0,0,0,0.18);"></div>
<div style="left:756px;top:310px;width:20px;height:20px;background:#6cbf9c;border:1px solid #3f9a70;"></div>
<div style="left:754px;top:332px;width:209px;height:22px;background:#c6ecdc;border:1px solid #5fbf95;"></div>
<svg style="left:752px;top:307px" width="213" height="95">
<circle cx="14" cy="12.5" r="5" fill="#fff" stroke="#666" stroke-width="1"/>
<circle cx="14" cy="12.5" r="2.5" fill="#888"/>
<circle cx="14" cy="35.5" r="5" fill="#fff" stroke="#666" stroke-width="1"/>
<circle cx="14" cy="58.5" r="5" fill="#fff" stroke="#666" stroke-width="1"/>
<circle cx="14" cy="81.5" r="5" fill="#fff" stroke="#666" stroke-width="1"/>
</svg>
<div class="t" style="left:787px;top:313.14px;font-size:12px;color:#444;">Копировать ячейки</div>
<div class="t" style="left:787px;top:336.14px;font-size:12px;color:#333;">Заполн<u>и</u>ть</div>
<div class="t" style="left:787px;top:359.14px;font-size:12px;color:#444;">Заполнить только ф<u>о</u>рматы</div>
<div class="t" style="left:787px;top:382.14px;font-size:12px;color:#444;">Заполнить только зна<u>ч</u>ения</div>
<div style="left:14px;top:256px;width:745px;height:32px;border:3.3px solid #ff0000;border-radius:9px;"></div>
<div style="left:745px;top:324px;width:242px;height:36px;border:3.5px solid #ff0000;border-radius:9px;"></div>
</body></html>
